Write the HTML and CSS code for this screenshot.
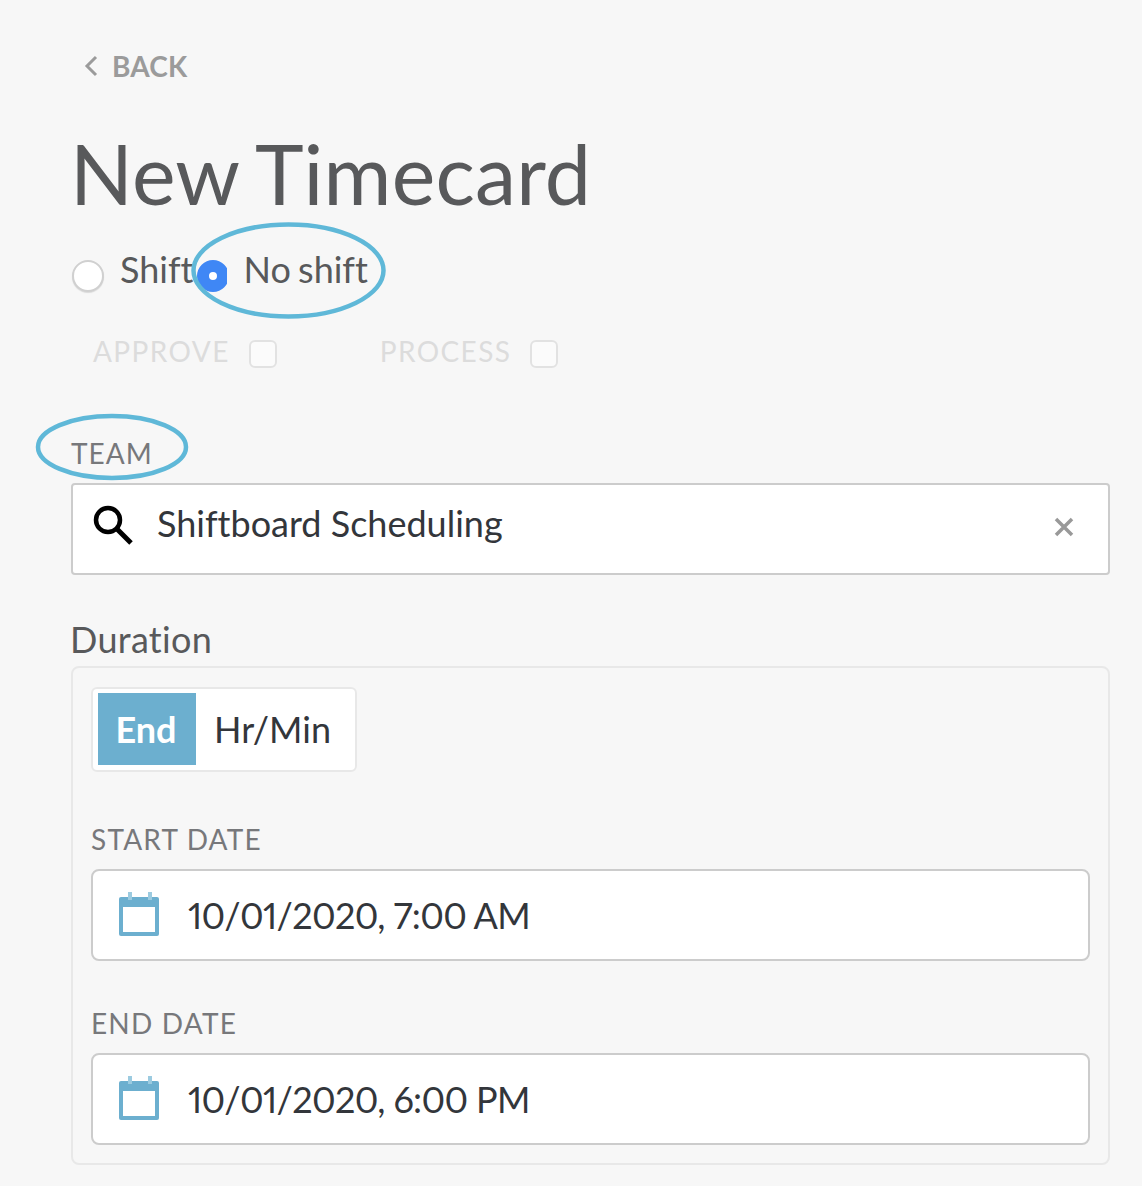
FILE: index.html
```html
<!DOCTYPE html>
<html lang="en">
<head>
  <meta charset="UTF-8">
  <meta name="viewport" content="width=device-width, initial-scale=1.0">
  <title>New Timecard</title>
  <link rel="stylesheet" href="styles.css">
</head>
<body>
  <div class="page">
    <a class="back">
      <svg class="back-icon" width="14" height="24" viewBox="0 0 14 24"><path d="M12 3 L3 12 L12 21" fill="none" stroke="#9b9b9b" stroke-width="3"/></svg>
      <span>BACK</span>
    </a>

    <h1 class="title">New Timecard</h1>

    <div class="shift-row">
      <span class="radio"></span>
      <span class="shift-label">Shift</span>
      <span class="radio-on-clip"><span class="radio-on"></span></span>
      <span class="no-shift-label">No shift</span>
      <svg class="circle-shift" width="197" height="99" viewBox="0 0 197 99"><ellipse cx="98.5" cy="49.5" rx="95" ry="46" fill="none" stroke="#5fb8d8" stroke-width="4.5"/></svg>
    </div>

    <div class="check-row">
      <span class="check-label">APPROVE</span>
      <span class="check-box"></span>
      <span class="check-label check-second">PROCESS</span>
      <span class="check-box"></span>
    </div>

    <div class="team-label">
      <span>TEAM</span>
      <svg class="circle-team" width="156" height="70" viewBox="0 0 156 70"><ellipse cx="78" cy="35" rx="74" ry="31" fill="none" stroke="#5fb8d8" stroke-width="4.5"/></svg>
    </div>
    <div class="search-input">
      <svg class="search-icon" width="42" height="42" viewBox="0 0 42 42"><circle cx="16" cy="16" r="12" fill="none" stroke="#000" stroke-width="4.5"/><path d="M24.5 24.5 L39 39" fill="none" stroke="#000" stroke-width="5"/></svg>
      <span class="search-text">Shiftboard Scheduling</span>
      <svg class="clear-icon" width="20" height="20" viewBox="0 0 20 20"><path d="M2 2 L18 18 M18 2 L2 18" fill="none" stroke="#999" stroke-width="3.5"/></svg>
    </div>

    <div class="duration-title">Duration</div>
    <div class="duration-panel">
      <div class="toggle">
        <span class="toggle-on">End</span>
        <span class="toggle-off">Hr/Min</span>
      </div>

      <div class="date-label date-first">START DATE</div>
      <div class="date-input">
        <svg class="cal-icon" width="42" height="46" viewBox="0 0 42 46"><path d="M3 5 H39 A2 2 0 0 1 41 7 V42 A2 2 0 0 1 39 44 H3 A2 2 0 0 1 1 42 V7 A2 2 0 0 1 3 5 Z" fill="#6cafcf"/><rect x="5" y="15" width="32" height="25" fill="#fff"/><rect x="10" y="0" width="4" height="8" fill="#9ccbe0"/><rect x="30" y="0" width="4" height="8" fill="#9ccbe0"/></svg>
        <span>10/01/2020, 7:00 AM</span>
      </div>

      <div class="date-label date-second">END DATE</div>
      <div class="date-input">
        <svg class="cal-icon" width="42" height="46" viewBox="0 0 42 46"><path d="M3 5 H39 A2 2 0 0 1 41 7 V42 A2 2 0 0 1 39 44 H3 A2 2 0 0 1 1 42 V7 A2 2 0 0 1 3 5 Z" fill="#6cafcf"/><rect x="5" y="15" width="32" height="25" fill="#fff"/><rect x="10" y="0" width="4" height="8" fill="#9ccbe0"/><rect x="30" y="0" width="4" height="8" fill="#9ccbe0"/></svg>
        <span>10/01/2020, 6:00 PM</span>
      </div>
    </div>
  </div>
</body>
</html>
```

FILE: styles.css
```css
* {
  box-sizing: border-box;
}

body {
  margin: 0;
  background-color: #f7f7f7;
  font-family: Lato, "Open Sans", sans-serif;
  font-variant-ligatures: none;
  font-variant-numeric: proportional-nums;
  color: #33363b;
}

.page {
  height: 1186px;
  overflow: hidden;
  padding: 49px 32px 0 71px;
}

.back {
  display: flex;
  align-items: center;
  height: 34px;
  padding-left: 13px;
  font-size: 28px;
  font-weight: 700;
  letter-spacing: 0.2px;
  color: #9b9b9b;
}

.back-icon {
  margin-right: 14px;
}

.title {
  margin: 43px 0 0 -1px;
  font-size: 82.5px;
  font-weight: 400;
  line-height: 96px;
  letter-spacing: 0.2px;
  word-spacing: -2.5px;
  color: #58595b;
}

.shift-row {
  position: relative;
  display: flex;
  align-items: flex-start;
  height: 46px;
  margin-top: 25px;
  font-size: 36px;
  line-height: 44px;
  color: #58595b;
}

.radio {
  width: 32px;
  height: 32px;
  margin: 13px 0 0 1px;
  border: 2px solid #d0d0d0;
  border-radius: 50%;
  background: #fff;
  box-shadow: 0 1px 1px rgba(0, 0, 0, 0.12);
}

.shift-label {
  margin-left: 16px;
}

.radio-on-clip {
  width: 30px;
  height: 32px;
  margin: 13px 0 0 4px;
  overflow: hidden;
}

.radio-on {
  display: block;
  width: 32px;
  height: 32px;
  border: 12px solid #3f87f5;
  border-radius: 50%;
  background: #fff;
}

.no-shift-label {
  margin-left: 16px;
  word-spacing: -2px;
}

.circle-shift {
  position: absolute;
  left: 119px;
  top: -26px;
}

.check-row {
  display: flex;
  align-items: center;
  height: 34px;
  margin-top: 41px;
  padding-left: 22px;
}

.check-label {
  font-size: 28px;
  letter-spacing: 1.4px;
  color: #dcdcdc;
}

.check-second {
  margin-left: 103px;
}

.check-box {
  width: 28px;
  height: 28px;
  margin: 6px 0 0 19px;
  border: 2px solid #e2e2e2;
  border-radius: 6px;
  background: #fbfbfb;
}

.team-label {
  position: relative;
  height: 34px;
  margin-top: 68px;
  font-size: 28px;
  line-height: 34px;
  letter-spacing: 1px;
  color: #77787b;
}

.circle-team {
  position: absolute;
  left: -37px;
  top: -24px;
}

.search-input {
  display: flex;
  align-items: center;
  height: 92px;
  margin-top: 13px;
  padding: 0 34px 0 19px;
  border: 2px solid #ccc;
  border-radius: 4px;
  background: #fff;
  font-size: 36px;
}

.search-icon {
  margin-bottom: 8px;
}

.search-text {
  flex: 1;
  margin: 0 0 13px 23px;
}

.clear-icon {
  margin-bottom: 4px;
}

.duration-title {
  margin: 42px 0 0 -1px;
  font-size: 36px;
  line-height: 44px;
  letter-spacing: 0.3px;
  color: #58595b;
}

.duration-panel {
  height: 499px;
  margin-top: 5px;
  padding: 19px 18px 0;
  border: 2px solid #e8e8e8;
  border-radius: 8px;
}

.toggle {
  display: flex;
  align-items: stretch;
  width: 266px;
  height: 85px;
  padding: 4px 4px 5px 5px;
  border: 2px solid #e8e8e8;
  border-radius: 6px;
  background: #fff;
  font-size: 36px;
}

.toggle-on {
  display: flex;
  align-items: center;
  justify-content: center;
  width: 98px;
  padding-right: 2px;
  background: #6cafcf;
  color: #fff;
  font-weight: 700;
}

.toggle-off {
  display: flex;
  align-items: center;
  margin-left: 18px;
}

.date-label {
  height: 34px;
  font-size: 28px;
  line-height: 34px;
  letter-spacing: 1.2px;
  color: #77787b;
}

.date-first {
  margin-top: 50px;
}

.date-second {
  margin-top: 45px;
}

.date-input {
  display: flex;
  align-items: center;
  height: 92px;
  margin-top: 13px;
  padding: 0 0 0 25px;
  border: 2px solid #ccc;
  border-radius: 8px;
  background: #fff;
  font-size: 36px;
}

.date-input span {
  margin-left: 28px;
  letter-spacing: -0.65px;
}
```
